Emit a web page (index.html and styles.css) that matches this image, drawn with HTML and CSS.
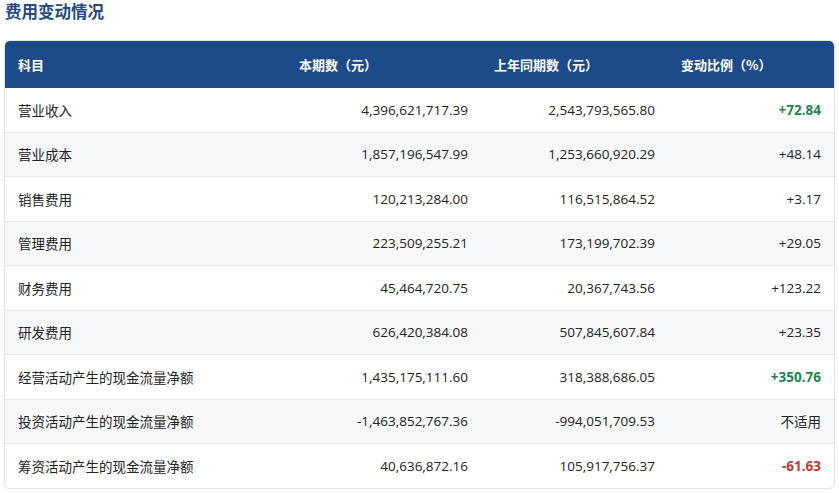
FILE: index.html
```html
<!DOCTYPE html>
<html lang="zh-CN">
<head>
<meta charset="utf-8">
<title>费用变动情况</title>
<link rel="stylesheet" href="styles.css">
</head>
<body>
<h2 class="title">费用变动情况</h2>
<div class="card">
  <table class="tbl">
    <colgroup>
      <col class="c1"><col class="c2"><col class="c3"><col class="c4">
    </colgroup>
    <thead>
      <tr><th>科目</th><th>本期数（元）</th><th>上年同期数（元）</th><th>变动比例（%）</th></tr>
    </thead>
    <tbody>
      <tr><td>营业收入</td><td class="num">4,396,621,717.39</td><td class="num">2,543,793,565.80</td><td class="num up">+72.84</td></tr>
      <tr><td>营业成本</td><td class="num">1,857,196,547.99</td><td class="num">1,253,660,920.29</td><td class="num">+48.14</td></tr>
      <tr><td>销售费用</td><td class="num">120,213,284.00</td><td class="num">116,515,864.52</td><td class="num">+3.17</td></tr>
      <tr><td>管理费用</td><td class="num">223,509,255.21</td><td class="num">173,199,702.39</td><td class="num">+29.05</td></tr>
      <tr><td>财务费用</td><td class="num">45,464,720.75</td><td class="num">20,367,743.56</td><td class="num">+123.22</td></tr>
      <tr><td>研发费用</td><td class="num">626,420,384.08</td><td class="num">507,845,607.84</td><td class="num">+23.35</td></tr>
      <tr><td>经营活动产生的现金流量净额</td><td class="num">1,435,175,111.60</td><td class="num">318,388,686.05</td><td class="num up">+350.76</td></tr>
      <tr><td>投资活动产生的现金流量净额</td><td class="num">-1,463,852,767.36</td><td class="num">-994,051,709.53</td><td class="num">不适用</td></tr>
      <tr><td>筹资活动产生的现金流量净额</td><td class="num">40,636,872.16</td><td class="num">105,917,756.37</td><td class="num down">-61.63</td></tr>
    </tbody>
  </table>
</div>
</body>
</html>
```

FILE: styles.css
```css
html, body {
  margin: 0;
  padding: 0;
  background: #ffffff;
}
body {
  font-family: "Open Sans", "Noto Sans CJK SC", sans-serif;
  color: #222;
  padding: 0 4px;
}
.title {
  margin: 0;
  padding: 1px 0 0 1px;
  font-size: 16.5px;
  line-height: 21px;
  font-weight: 700;
  color: #1f4a84;
  font-family: "Noto Sans CJK SC", sans-serif;
}
.card {
  margin-top: 18px;
  width: 829px;
  border: 1px solid #e1e4e8;
  border-radius: 6px;
  overflow: hidden;
  box-shadow: 0 1px 3px rgba(0,0,0,0.06);
}
.tbl {
  width: 100%;
  border-collapse: collapse;
  table-layout: fixed;
}
.c1 { width: 281px; }
.c2 { width: 195px; }
.c3 { width: 187px; }
.c4 { width: auto; }
.tbl th {
  background: #1d4b8a;
  color: #ffffff;
  font-family: "Noto Sans CJK SC", sans-serif;
  font-size: 13px;
  font-weight: 700;
  text-align: left;
  height: 47px;
  padding: 0 13px;
  box-sizing: border-box;
}
.tbl td {
  font-size: 13.5px;
  height: 44.5px;
  padding: 0 13px;
  box-sizing: border-box;
  border-top: 1px solid #e4e7eb;
  color: #222;
  white-space: nowrap;
}
.tbl tbody tr:first-child td { border-top: none; height: 44px; }
.tbl tbody tr:nth-child(even) td { background: #f6f7f9; }
.tbl td.num { text-align: right; }
.tbl td.up { color: #1e8449; font-weight: 700; }
.tbl td.down { color: #c0392b; font-weight: 700; }
```
